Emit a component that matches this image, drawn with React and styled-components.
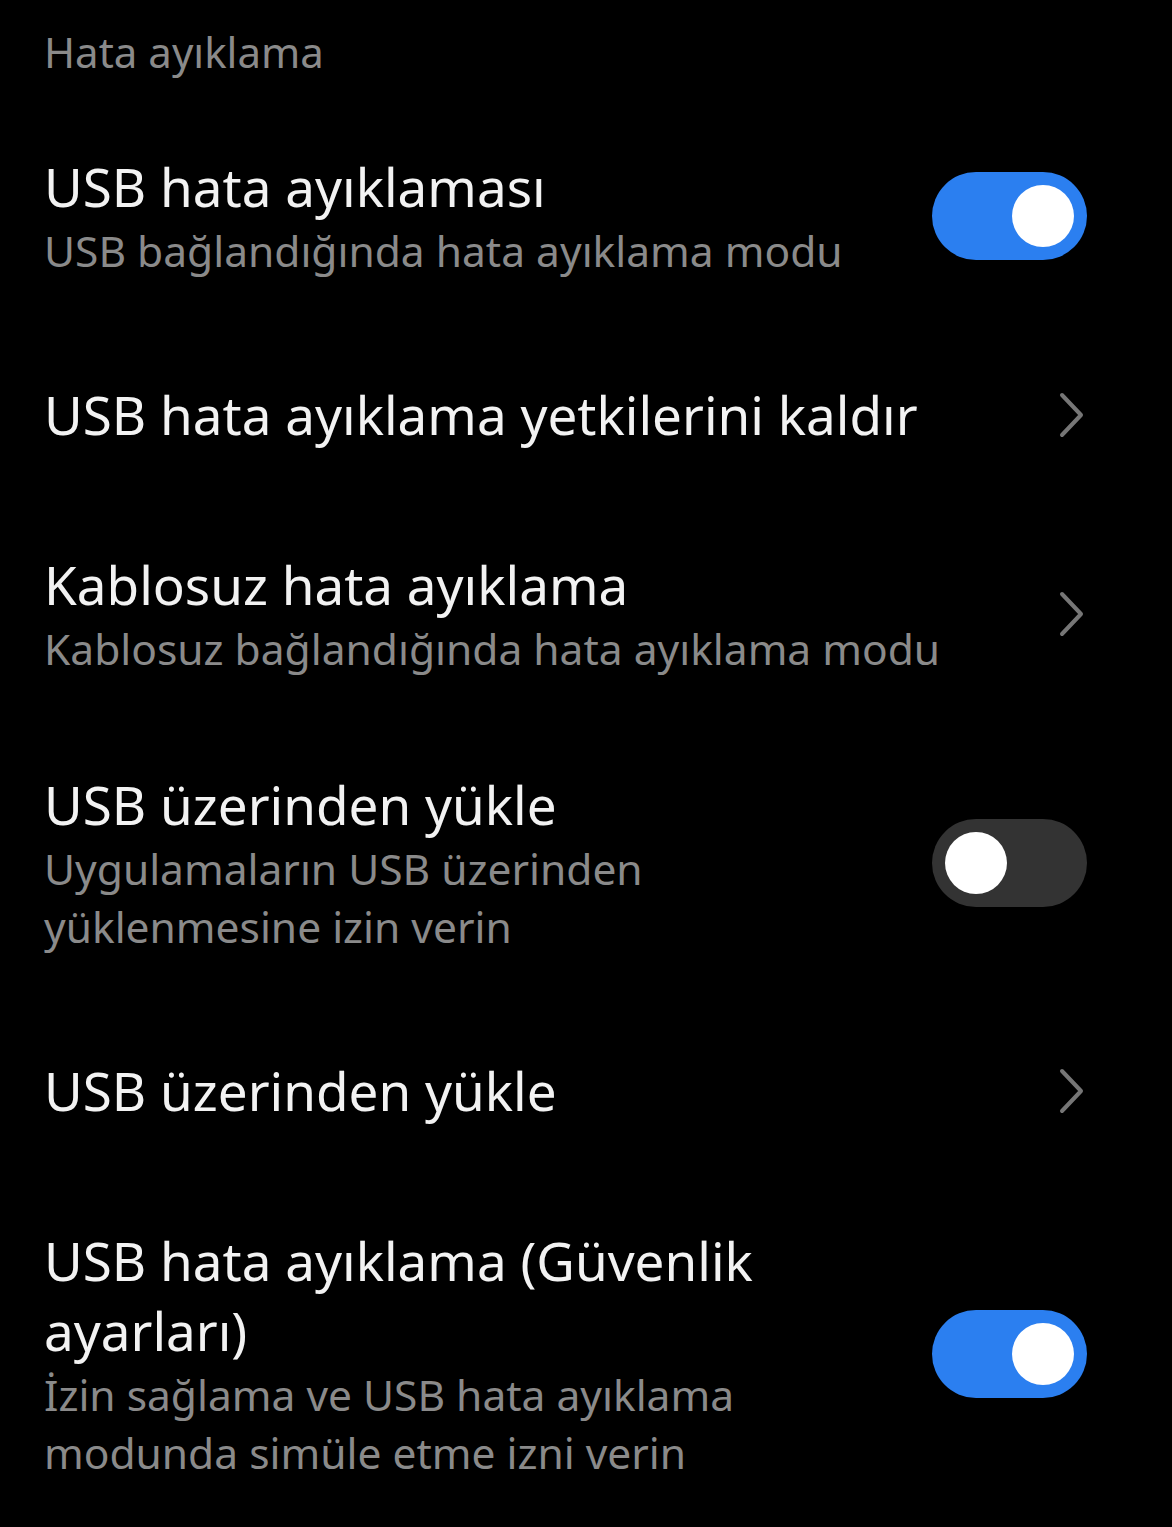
import React from "react";
import styled, { createGlobalStyle } from "styled-components";

const GlobalStyle = createGlobalStyle`
  html, body {
    margin: 0;
    padding: 0;
    background: #000;
  }
  body {
    font-family: "Noto Sans", "Open Sans", sans-serif;
    -webkit-font-smoothing: antialiased;
  }
`;

const Page = styled.div`
  width: 1172px;
  min-height: 1527px;
  background: #000;
  padding: 22px 85px 0 44px;
  box-sizing: border-box;
`;

const SectionTitle = styled.div`
  color: #8a8a8a;
  font-size: 42px;
  line-height: 60px;
  margin-bottom: 20px;
`;

const List = styled.div`
  display: flex;
  flex-direction: column;
`;

const Row = styled.div`
  display: flex;
  align-items: center;
  gap: ${(p) => (p.$toggle ? "60px" : "40px")};
  padding: ${(p) => p.$top ?? 50}px 0 50px;
`;

const Texts = styled.div`
  flex: 1;
  min-width: 0;
  display: flex;
  flex-direction: column;
`;

const Title = styled.div`
  color: #f2f2f2;
  font-size: 53px;
  line-height: 70px;
`;

const Subtitle = styled.div`
  color: #8a8a8a;
  font-size: 42.5px;
  line-height: 58px;
`;

const Track = styled.div`
  flex: none;
  width: 155px;
  height: 88px;
  border-radius: 44px;
  background: ${(p) => (p.$on ? "#2b7ff0" : "#333333")};
  display: flex;
  align-items: center;
  justify-content: ${(p) => (p.$on ? "flex-end" : "flex-start")};
  padding: 0 13px;
  box-sizing: border-box;
`;

const Knob = styled.div`
  width: 62px;
  height: 62px;
  border-radius: 50%;
  background: #fff;
`;

const ChevronBox = styled.div`
  flex: none;
  width: 26px;
  display: flex;
  justify-content: flex-end;
  margin-right: 2px;
`;

const Toggle = ({ on }) => (
  <Track $on={on}>
    <Knob />
  </Track>
);

const Chevron = () => (
  <ChevronBox>
    <svg width="26" height="46" viewBox="0 0 26 46" fill="none">
      <path
        d="M3 3 L22 23 L3 43"
        stroke="#767676"
        strokeWidth="4"
        strokeLinecap="round"
        strokeLinejoin="round"
      />
    </svg>
  </ChevronBox>
);

const items = [
  {
    title: "USB hata ayıklaması",
    sub: "USB bağlandığında hata ayıklama modu",
    control: "on",
  },
  { title: "USB hata ayıklama yetkilerini kaldır", control: "chevron" },
  {
    title: "Kablosuz hata ayıklama",
    sub: "Kablosuz bağlandığında hata ayıklama modu",
    control: "chevron",
  },
  {
    title: "USB üzerinden yükle",
    sub: "Uygulamaların USB üzerinden yüklenmesine izin verin",
    control: "off",
    top: 42,
  },
  { title: "USB üzerinden yükle", control: "chevron" },
  {
    title: "USB hata ayıklama (Güvenlik ayarları)",
    sub: "İzin sağlama ve USB hata ayıklama modunda simüle etme izni verin",
    control: "on",
  },
];

export default function App() {
  return (
    <>
      <GlobalStyle />
      <Page>
        <SectionTitle>Hata ayıklama</SectionTitle>
        <List>
          {items.map((it, i) => (
            <Row key={i} $toggle={it.control !== "chevron"} $top={it.top}>
              <Texts>
                <Title>{it.title}</Title>
                {it.sub && <Subtitle>{it.sub}</Subtitle>}
              </Texts>
              {it.control === "chevron" ? (
                <Chevron />
              ) : (
                <Toggle on={it.control === "on"} />
              )}
            </Row>
          ))}
        </List>
      </Page>
    </>
  );
}
